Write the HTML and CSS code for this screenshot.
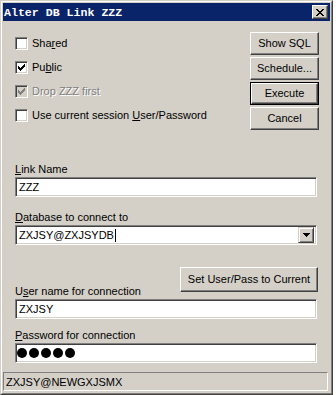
FILE: index.html
```html
<!DOCTYPE html>
<html>
<head>
<meta charset="utf-8">
<link rel="stylesheet" href="styles.css">
</head>
<body>
<div class="window">
  <div class="frame">
    <div class="titlebar">
      <span class="title">Alter DB Link ZZZ</span>
      <span class="close">
        <svg width="8" height="7" viewBox="0 0 8 7" shape-rendering="crispEdges">
          <path d="M0 0h2v1h-2zM6 0h2v1h-2zM1 1h2v1h-2zM5 1h2v1h-2zM2 2h4v1h-4zM3 3h2v1h-2zM2 4h4v1h-4zM1 5h2v1h-2zM5 5h2v1h-2zM0 6h2v1h-2zM6 6h2v1h-2z" fill="#000"/>
        </svg>
      </span>
    </div>
    <div class="content">
      <div class="top">
        <div class="checks">
          <div class="check-row">
            <span class="box"></span>
            <span class="label">Sha<u>r</u>ed</span>
          </div>
          <div class="check-row">
            <span class="box">
              <svg width="7" height="7" viewBox="0 0 7 7" shape-rendering="crispEdges"><path d="M0 2h1v3h-1zM1 3h1v3h-1zM2 4h1v3h-1zM3 3h1v3h-1zM4 2h1v3h-1zM5 1h1v3h-1zM6 0h1v3h-1z" fill="#000"/></svg>
            </span>
            <span class="label">Pu<u>b</u>lic</span>
          </div>
          <div class="check-row disabled">
            <span class="box">
              <svg width="7" height="7" viewBox="0 0 7 7" shape-rendering="crispEdges"><path d="M0 2h1v3h-1zM1 3h1v3h-1zM2 4h1v3h-1zM3 3h1v3h-1zM4 2h1v3h-1zM5 1h1v3h-1zM6 0h1v3h-1z" fill="#808080"/></svg>
            </span>
            <span class="label">Drop ZZZ first</span>
          </div>
          <div class="check-row">
            <span class="box"></span>
            <span class="label">Use current session <u>U</u>ser/Password</span>
          </div>
        </div>
        <div class="buttons">
          <div class="btn">Show SQL</div>
          <div class="btn">Schedule...</div>
          <div class="btn default"><span>Execute</span></div>
          <div class="btn">Cancel</div>
        </div>
      </div>

      <div class="field link">
        <div class="flabel"><u>L</u>ink Name</div>
        <div class="input">ZZZ</div>
      </div>

      <div class="field db">
        <div class="flabel"><u>D</u>atabase to connect to</div>
        <div class="input combo">
          <span class="ctext">ZXJSY@ZXJSYDB<span class="caret"></span></span>
          <span class="drop">
            <svg width="7" height="4" viewBox="0 0 7 4" shape-rendering="crispEdges"><path d="M0 0h7v1h-7zM1 1h5v1h-5zM2 2h3v1h-3zM3 3h1v1h-1z" fill="#000"/></svg>
          </span>
        </div>
      </div>

      <div class="field user">
        <div class="user-head">
          <div class="flabel">U<u>s</u>er name for connection</div>
          <div class="btn setbtn">Set User/Pass to Current</div>
        </div>
        <div class="input">ZXJSY</div>
      </div>

      <div class="field pass">
        <div class="flabel"><u>P</u>assword for connection</div>
        <div class="input dots"><span class="dot"></span><span class="dot"></span><span class="dot"></span><span class="dot"></span><span class="dot"></span></div>
      </div>
    </div>
    <div class="status">
      <div class="panel">ZXJSY@NEWGXJSMX</div>
    </div>
  </div>
</div>
</body>
</html>
```

FILE: styles.css
```css
* { box-sizing: border-box; }
html, body {
  margin: 0;
  padding: 0;
  background: #ffffff;
}
body {
  font-family: "Liberation Sans", Arial, sans-serif;
  font-size: 11px;
  color: #000;
}
.window {
  width: 333px;
  height: 395px;
  border: 1px solid;
  border-color: #d4d0c8 #404040 #404040 #d4d0c8;
  background: #d4d0c8;
}
.frame {
  height: 100%;
  border: 1px solid;
  border-color: #ffffff #808080 #808080 #ffffff;
  padding: 1px;
  display: flex;
  flex-direction: column;
}
.titlebar {
  height: 18px;
  background: #0a246a;
  display: flex;
  align-items: center;
  justify-content: space-between;
  padding: 0 2px 0 1px;
}
.title {
  font-family: "Liberation Mono", "DejaVu Sans Mono", monospace;
  font-weight: bold;
  font-size: 11.6px;
  color: #fff;
}
.close {
  width: 16px;
  height: 14px;
  background: #d4d0c8;
  border: 1px solid;
  border-color: #fff #404040 #404040 #fff;
  box-shadow: inset -1px -1px #808080;
  display: flex;
  align-items: center;
  justify-content: center;
  padding-right: 1px;
}
.close svg { display: block; }

.content {
  flex: 1;
  padding: 0 11px 0 12px;
  display: flex;
  flex-direction: column;
}
.top {
  display: flex;
  justify-content: space-between;
  align-items: flex-start;
  padding-top: 10px;
}
.checks {
  display: flex;
  flex-direction: column;
}
.check-row {
  height: 24px;
  display: flex;
  align-items: center;
  gap: 4px;
}
.box {
  width: 13px;
  height: 13px;
  background: #fff;
  border: 1px solid;
  border-color: #808080 #fff #fff #808080;
  box-shadow: inset 1px 1px #404040, inset -1px -1px #d4d0c8;
  display: flex;
  align-items: center;
  justify-content: center;
}
.box svg { display: block; }
.disabled .box { background: #d4d0c8; }
.disabled .label {
  color: #808080;
  text-shadow: 1px 1px 0 #fff;
}
.label { line-height: 13px; }

.buttons {
  display: flex;
  flex-direction: column;
  gap: 2px;
  padding-top: 1px;
  width: 69px;
}
.btn {
  height: 23px;
  background: #d4d0c8;
  border: 1px solid;
  border-color: #fff #404040 #404040 #fff;
  box-shadow: inset -1px -1px #808080;
  display: flex;
  align-items: center;
  justify-content: center;
  padding-bottom: 1px;
}
.btn.default {
  border: 1px solid #000;
  box-shadow: none;
  padding: 0;
}
.btn.default span {
  flex: 1;
  align-self: stretch;
  display: flex;
  align-items: center;
  justify-content: center;
  border: 1px solid;
  border-color: #fff #404040 #404040 #fff;
  box-shadow: inset -1px -1px #808080;
  padding-bottom: 1px;
}

.field {
  display: flex;
  flex-direction: column;
  margin-right: 2px;
}
.flabel {
  line-height: 13px;
  margin-bottom: 1px;
}
.input {
  height: 20px;
  background: #fff;
  border: 1px solid;
  border-color: #808080 #fff #fff #808080;
  box-shadow: inset 1px 1px #404040, inset -1px -1px #d4d0c8;
  display: flex;
  align-items: center;
  padding: 0 3px;
}
.link { margin-top: 33px; }
.db { margin-top: 14px; }
.combo { padding-right: 2px; justify-content: space-between; }
.ctext { display: flex; align-items: center; }
.caret {
  width: 1px;
  height: 13px;
  background: #000;
  margin-left: 1px;
}
.drop {
  width: 16px;
  height: 16px;
  background: #d4d0c8;
  border: 1px solid;
  border-color: #d4d0c8 #404040 #404040 #d4d0c8;
  box-shadow: inset 1px 1px #fff, inset -1px -1px #808080;
  display: flex;
  align-items: center;
  justify-content: center;
}
.drop svg { display: block; }

.user { margin-top: 22px; }
.user-head {
  display: flex;
  justify-content: space-between;
  align-items: flex-end;
}
.setbtn {
  width: 138px;
  height: 25px;
  margin-bottom: 7px;
  margin-right: -1px;
}
.pass { margin-top: 10px; }
.dots { padding-left: 1px; gap: 2px; }
.dot {
  width: 10px;
  height: 10px;
  border-radius: 50%;
  background: #000;
}

.status {
  height: 22px;
  padding: 2px 0 0 0;
}
.panel {
  height: 19px;
  border: 1px solid;
  border-color: #808080 #fff #fff #808080;
  display: flex;
  align-items: center;
  padding-left: 2px;
  margin-right: 2px;
}
```
